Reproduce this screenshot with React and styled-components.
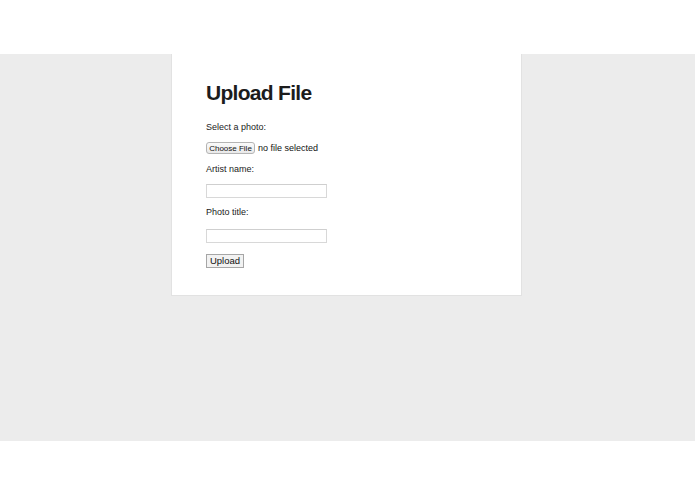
import React from "react";
import styled, { createGlobalStyle } from "styled-components";

const GlobalStyle = createGlobalStyle`
  html, body {
    margin: 0;
    padding: 0;
    background: #ffffff;
  }
  body {
    font-family: "Liberation Sans", Arial, Helvetica, sans-serif;
    color: #222222;
  }
`;

const Page = styled.div`
  padding-top: 54px;
  height: 494px;
  box-sizing: border-box;
`;

const Band = styled.main`
  height: 387px;
  background: #ececec;
  display: flex;
  align-items: flex-start;
  padding-left: 171px;
  box-sizing: border-box;
`;

const Card = styled.section`
  width: 351px;
  box-sizing: border-box;
  background: #ffffff;
  border: 1px solid #e2e2e2;
  border-top: none;
  padding: 27px 34px 27px 34px;
`;

const Title = styled.h1`
  margin: 0;
  font-size: 21px;
  line-height: 24px;
  font-weight: 700;
  letter-spacing: -0.7px;
  color: #1c1c1c;
`;

const Form = styled.form`
  display: flex;
  flex-direction: column;
  align-items: flex-start;
  margin-top: 16px;
`;

const Label = styled.label`
  display: block;
  font-size: 9px;
  line-height: 12px;
  color: #222222;
  margin-top: ${(p) => p.$gap ?? 0}px;
`;

const FileRow = styled.div`
  display: flex;
  align-items: center;
  gap: 3px;
  margin-top: 9px;
  font-size: 9px;
  color: #111111;
`;

const HiddenInput = styled.input`
  display: none;
`;

const ChooseButton = styled.label`
  display: inline-flex;
  align-items: center;
  justify-content: center;
  box-sizing: border-box;
  width: 49px;
  height: 12px;
  font-size: 8px;
  color: #111111;
  background: linear-gradient(#fbfbfb, #e9e9e9);
  border: 1px solid #b4b4b4;
  border-radius: 3px;
  cursor: pointer;
`;

const TextField = styled.input`
  box-sizing: border-box;
  width: 121px;
  height: 14px;
  margin: ${(p) => p.$gap ?? 9}px 0 0 0;
  padding: 0 2px;
  border: 1px solid #d8d8d8;
  border-top-color: #cfcfcf;
  background: #ffffff;
  font-size: 9px;
  font-family: inherit;
  outline: none;
`;

const SubmitButton = styled.button`
  box-sizing: border-box;
  width: 38px;
  height: 14px;
  margin-top: 11px;
  padding: 0;
  font-family: inherit;
  font-size: 9.5px;
  color: #111111;
  background: #f2f2f2;
  border: 1px solid #a6a6a6;
  border-radius: 0;
  line-height: 12px;
`;

export default function App() {
  return (
    <>
      <GlobalStyle />
      <Page>
        <Band>
          <Card>
            <Title>Upload File</Title>
            <Form onSubmit={(e) => e.preventDefault()}>
              <Label htmlFor="photo">Select a photo:</Label>
              <FileRow>
                <ChooseButton htmlFor="photo">Choose File</ChooseButton>
                <HiddenInput id="photo" type="file" accept="image/*" />
                <span>no file selected</span>
              </FileRow>
              <Label htmlFor="artist" $gap={9}>Artist name:</Label>
              <TextField id="artist" type="text" />
              <Label htmlFor="title" $gap={8}>Photo title:</Label>
              <TextField id="title" type="text" $gap={11} />
              <SubmitButton type="submit">Upload</SubmitButton>
            </Form>
          </Card>
        </Band>
      </Page>
    </>
  );
}
